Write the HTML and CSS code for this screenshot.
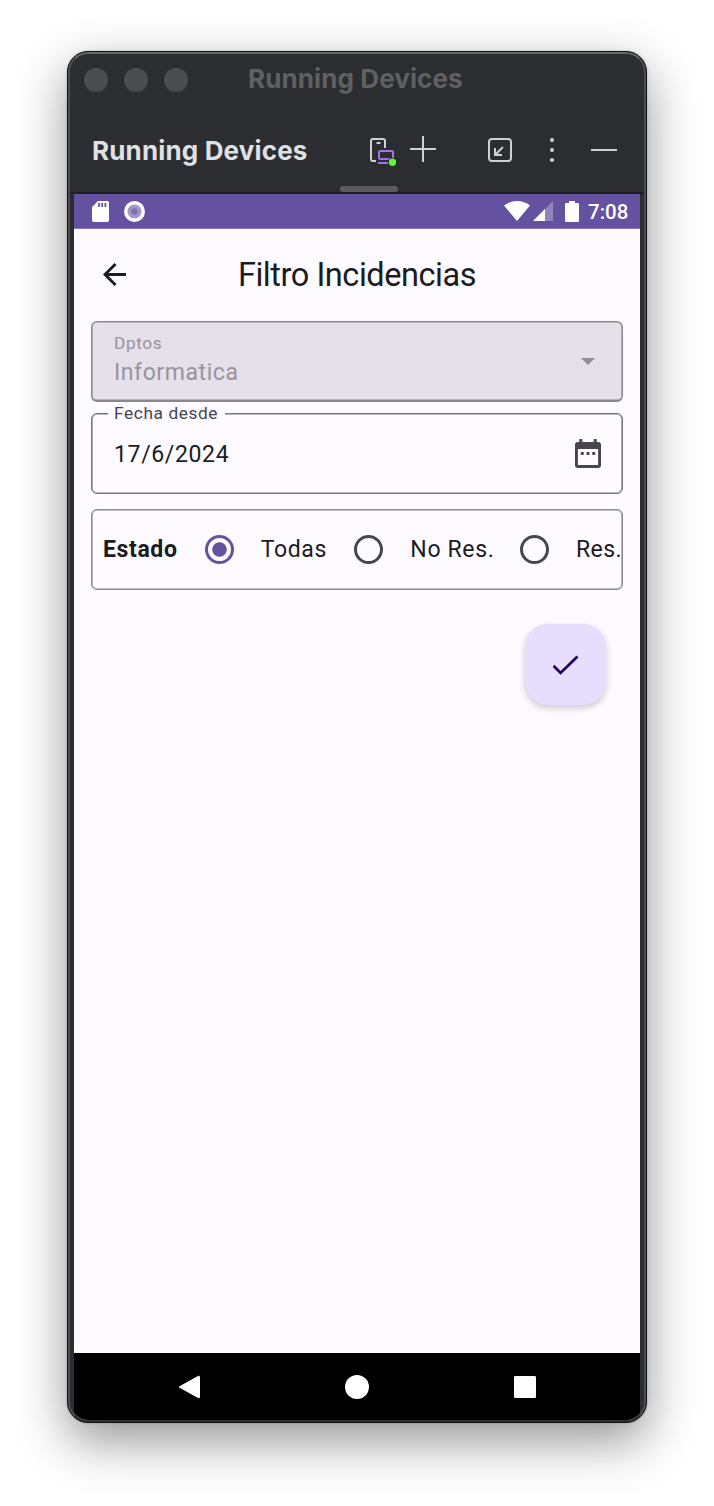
FILE: index.html
```html
<!DOCTYPE html>
<html lang="es">
<head>
<meta charset="utf-8">
<title>Running Devices</title>
<link rel="stylesheet" href="styles.css">
</head>
<body>
<div class="window">
  <div class="frame">
    <header class="titlebar">
      <div class="lights"><i></i><i></i><i></i></div>
      <span class="window-title">Running Devices</span>
    </header>
    <div class="toolbar">
      <span class="tool-title">Running Devices</span>
      <div class="tools">
        <svg class="ic-device" width="30" height="30" viewBox="0 0 30 30" fill="none">
          <path d="M8 25H5a2 2 0 0 1-2-2V5a2 2 0 0 1 2-2h10a2 2 0 0 1 2 2v7M8.500 7h4" stroke="#ced0d6" stroke-width="2"/>
          <rect x="11" y="15" width="14" height="8" rx="1.500" stroke="#a571e6" stroke-width="2"/>
          <path d="M10 27h12" stroke="#a571e6" stroke-width="2"/>
          <circle cx="24.500" cy="26.300" r="4.600" fill="#1e1f22"/>
          <circle cx="24.500" cy="26.300" r="3.700" fill="#5ffb3f"/>
        </svg>
        <svg class="ic-plus" width="26" height="26" viewBox="0 0 26 26"><path d="M0 13h26M13 0v26" stroke="#ced0d6" stroke-width="2"/></svg>
        <svg class="ic-dock" width="24" height="24" viewBox="0 0 24 24" fill="none" stroke="#ced0d6" stroke-width="2"><rect x="1" y="1" width="22" height="22" rx="3"/><path d="M15 9l-8 8M7 10v7h7"/></svg>
        <svg class="ic-more" width="4" height="24" viewBox="0 0 4 24" fill="#ced0d6"><circle cx="2" cy="2" r="2"/><circle cx="2" cy="12" r="2"/><circle cx="2" cy="22" r="2"/></svg>
        <svg class="ic-min" width="26" height="2" viewBox="0 0 26 2"><path d="M0 1h26" stroke="#ced0d6" stroke-width="2"/></svg>
      </div>
      <span class="handle"></span>
    </div>

    <div class="screen">
      <div class="status">
        <svg class="ic-sd" width="17" height="21" viewBox="0 0 17 21"><path d="M6 0h9.300A1.700 1.700 0 0 1 17 1.700v17.600a1.700 1.700 0 0 1-1.700 1.700H1.700A1.700 1.700 0 0 1 0 19.300V6z" fill="#fff"/><path d="M7 2v4M10.200 2v4M13.400 2v4" stroke="#64519f" stroke-width="1.800"/></svg>
        <svg class="ic-ring" width="21" height="21" viewBox="0 0 21 21"><circle cx="10.500" cy="10.500" r="10.500" fill="#fff"/><circle cx="10.500" cy="10.500" r="7" fill="#a297c6"/><circle cx="10.500" cy="10.500" r="3.200" fill="#8171b2"/></svg>
        <svg class="ic-wifi" width="26" height="20" viewBox="0 0 26 20"><path d="M0 4.500Q5.500 0 13 0t13 4.500L13 20z" fill="#fff"/></svg>
        <svg class="ic-cell" width="20" height="20" viewBox="0 0 20 20"><path d="M20 0v20H0z" fill="#9184ba"/><path d="M12 8v12H0z" fill="#fff"/></svg>
        <svg class="ic-batt" width="14" height="21" viewBox="0 0 14 21"><path d="M4 0h6v2h3a1 1 0 0 1 1 1v17a1 1 0 0 1-1 1H1a1 1 0 0 1-1-1V3a1 1 0 0 1 1-1h3z" fill="#fff"/></svg>
        <span class="clock">7:08</span>
      </div>

      <div class="appbar">
        <svg class="ic-back" width="23" height="23" viewBox="4 4 16 16"><path d="M20 11H7.830l5.590-5.590L12 4l-8 8 8 8 1.410-1.410L7.830 13H20z" fill="#1c1b1f"/></svg>
        <h1>Filtro Incidencias</h1>
      </div>

      <main>
        <div class="field select">
          <div class="stack">
            <span class="label">Dptos</span>
            <span class="value">Informatica</span>
          </div>
          <svg width="14" height="7" viewBox="0 0 14 7"><path d="M0 0h14L7 7z" fill="#949098"/></svg>
        </div>
        <div class="field date">
          <span class="float-label">Fecha desde</span>
          <span class="value">17/6/2024</span>
          <svg class="ic-calendar" width="26" height="29" viewBox="0 0 26 29" fill="#49454f"><path fill-rule="evenodd" d="M4.300 0h2.900v2.900h11.600V0h2.900v2.900h1.400A2.900 2.900 0 0 1 26 5.800v20.300A2.900 2.900 0 0 1 23.100 29H2.900A2.900 2.900 0 0 1 0 26.100V5.800a2.900 2.900 0 0 1 2.900-2.900h1.400zM2.900 10v16.100h20.200V10z"/><path d="M5.800 13h2.900v2.900H5.800zM11.550 13h2.900v2.900h-2.900zM17.300 13h2.900v2.900h-2.900z"/></svg>
        </div>
        <div class="field radios">
          <b>Estado</b>
          <i class="radio on"></i><span class="todas">Todas</span>
          <i class="radio"></i><span class="nores">No Res.</span>
          <i class="radio"></i><span>Res.</span>
        </div>
        <button class="fab" aria-label="Aplicar">
          <svg width="26" height="20" viewBox="0 0 26 20"><path d="M.5 10.800l7.100 7.100L24.500 1.500" fill="none" stroke="#21005d" stroke-width="2.800"/></svg>
        </button>
      </main>

      <nav>
        <svg width="22" height="24" viewBox="0 0 22 24"><path d="M20.500 1.200L1.200 12 20.500 22.800Q21.500 23 21.500 22V2Q21.500 1 20.500 1.200z" fill="#fff" stroke="#fff"/></svg>
        <svg width="24" height="24" viewBox="0 0 24 24"><circle cx="12" cy="12" r="12" fill="#fff"/></svg>
        <svg width="22" height="22" viewBox="0 0 22 22"><rect width="22" height="22" rx="1.300" fill="#fff"/></svg>
      </nav>
    </div>
  </div>
</div>
</body>
</html>
```
FILE: styles.css
```css
* { box-sizing: border-box; }
html { background: #fff; }
body {
  margin: 0;
  height: 1506px;
  padding: 51px 67px 0;
  overflow: hidden;
  font-family: Roboto, "Noto Sans", sans-serif;
}
svg { display: block; flex: none; }

.window {
  height: 1372px;
  border: 1px solid #111213;
  border-radius: 21px;
  overflow: hidden;
  background: #2b2d30;
  box-shadow: 0 18px 50px rgba(0, 0, 0, .42), 0 0 3px rgba(0, 0, 0, .2);
}
.frame {
  height: 100%;
  border: 2px solid #4d4e51;
  border-top-color: #66686a;
  border-bottom-color: #303033;
  border-radius: 20px;
  overflow: hidden;
  background: #2b2d30;
  font-family: Inter, sans-serif;
}

.titlebar {
  height: 52px;
  padding-left: 14px;
  display: flex;
  align-items: center;
}
.lights { display: flex; gap: 16px; }
.lights i { width: 24px; height: 24px; border-radius: 50%; background: #4a4b4c; }
.window-title {
  margin-left: 60px;
  padding-bottom: 3px;
  font-size: 26px;
  font-weight: 700;
  letter-spacing: .1px;
  color: #5f6062;
  white-space: nowrap;
}
.toolbar {
  position: relative;
  height: 88px;
  padding: 2px 27px 0 22px;
  border-bottom: 2px solid #1e1f22;
  display: flex;
  align-items: center;
  justify-content: space-between;
}
.tool-title {
  padding-top: 1px;
  font-size: 26px;
  font-weight: 700;
  letter-spacing: .15px;
  color: #dfe1e5;
  white-space: nowrap;
}
.tools { display: flex; align-items: center; }
.ic-device { margin-top: 2px; }
.ic-plus { margin: -2px 52px 0 12px; }
.ic-more { margin: 0 37px 0 38px; }
.handle {
  position: absolute;
  left: 270px;
  bottom: 0;
  width: 58px;
  height: 6px;
  border-radius: 3px;
  background: #5a5c60;
}

.screen {
  margin: 0 4px;
  height: 1226px;
  display: flex;
  flex-direction: column;
  background: #fdfbff;
  font-family: Roboto, "Noto Sans", sans-serif;
  color: #1c1b1f;
}
.status {
  height: 35px;
  padding: 0 11px 0 18px;
  display: flex;
  align-items: center;
  background: #64519f;
  border-bottom: 1px solid #8878ba;
}
.ic-ring { margin-left: 15px; }
.ic-wifi { margin-left: auto; }
.ic-cell { margin-left: 3px; }
.ic-batt { margin-left: 12px; }
.clock {
  width: 41px;
  margin-left: 9px;
  padding-top: 1px;
  font-size: 20.5px;
  font-weight: 500;
  color: #fff;
}

.appbar {
  height: 92px;
  padding: 0 29px 1px;
  display: grid;
  grid-template-columns: 24px 1fr 24px;
  align-items: center;
}
.appbar h1 {
  margin: 0;
  text-align: center;
  font-size: 32.5px;
  letter-spacing: -.45px;
  font-weight: 400;
  white-space: nowrap;
}

main {
  flex: 1;
  padding: 0 17px;
  display: flex;
  flex-direction: column;
  font-size: 23.06px;
  letter-spacing: .62px;
}
.field {
  height: 81px;
  border: 1px solid #79747e;
  box-shadow: inset 0 0 0 .6px #79747e;
  border-radius: 6px;
  display: flex;
  align-items: center;
}
.select {
  padding: 0 27px 0 22px;
  justify-content: space-between;
  background: #e5e0ea;
  border-color: #8b888d;
  border-bottom-width: 2px;
  box-shadow: inset 0 0 0 .6px #8b888d;
  color: #98949c;
}
.stack { display: flex; flex-direction: column; }
.label { font-size: 17.3px; letter-spacing: .58px; line-height: 23px; }
.select .value { line-height: 35px; letter-spacing: .55px; }
.date {
  position: relative;
  margin-top: 11px;
  padding: 1px 21px 0 22px;
  justify-content: space-between;
}
.ic-calendar { margin-bottom: 2px; }
.float-label {
  position: absolute;
  left: 16px;
  top: -9px;
  padding: 0 7px 0 6px;
  background: #fdfbff;
  color: #49454f;
  font-size: 17.3px;
  letter-spacing: .6px;
  line-height: 16px;
}
.radios {
  margin-top: 15px;
  padding-left: 11px;
  border-color: #8b888d;
  box-shadow: inset 0 0 0 .6px #8b888d;
  white-space: nowrap;
}
.radios b { width: 102px; letter-spacing: .6px; }
.radio {
  flex: none;
  width: 29px;
  height: 29px;
  margin-right: 27px;
  border: 3px solid #49454f;
  border-radius: 50%;
}
.radio.on {
  border-color: #64519f;
  background: radial-gradient(circle, #64519f 6.8px, transparent 7.6px);
}
.todas { width: 93px; }
.radio.on + .todas { width: 94px; }
.nores { width: 110px; }
.radios span:last-child { letter-spacing: .4px; }
.fab {
  align-self: flex-end;
  width: 81px;
  height: 81px;
  margin: 34px 17px 0 0;
  padding: 0;
  border: 0;
  border-radius: 23px;
  display: grid;
  place-items: center;
  background: #e6defc;
  box-shadow: 0 3px 7px rgba(0, 0, 0, .2);
}

nav {
  height: 67px;
  padding: 1px 104px 0 104px;
  display: flex;
  align-items: center;
  justify-content: space-between;
  background: #000;
}
```
